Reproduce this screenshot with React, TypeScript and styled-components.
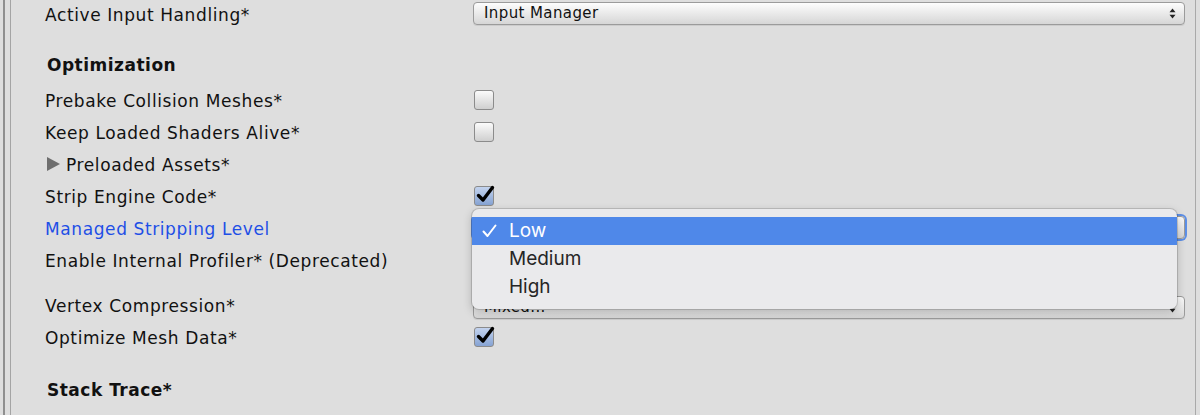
import styled, { createGlobalStyle } from "styled-components";

const GlobalStyle = createGlobalStyle`
  html, body {
    margin: 0;
    padding: 0;
    background: #dedede;
    overflow: hidden;
  }
  body {
    width: 1200px;
    height: 415px;
    font-family: "DejaVu Sans", "Liberation Sans", sans-serif;
  }
`;

const optimizationRows = [
  { id: "prebake", label: "Prebake Collision Meshes*", kind: "check", checked: false },
  { id: "shaders", label: "Keep Loaded Shaders Alive*", kind: "check", checked: false },
  { id: "preloaded", label: "Preloaded Assets*", kind: "foldout" },
  { id: "strip", label: "Strip Engine Code*", kind: "check", checked: true },
  { id: "managed", label: "Managed Stripping Level", kind: "menu" },
  { id: "profiler", label: "Enable Internal Profiler* (Deprecated)", kind: "none" },
];

const menuItems = ["Low", "Medium", "High"];

const UpDownArrows = () => (
  <svg width="7" height="11" viewBox="0 0 7 11">
    <path d="M3.5 0.5 L6.5 4.2 L0.5 4.2 Z" fill="#222" />
    <path d="M3.5 10.5 L6.5 6.8 L0.5 6.8 Z" fill="#222" />
  </svg>
);

const CheckMark = () => (
  <svg width="20" height="20" viewBox="0 0 20 20">
    <path
      d="M3.5 10.5 L8 15 L17.5 2.5"
      fill="none"
      stroke="#000"
      strokeWidth="3.4"
      strokeLinecap="round"
      strokeLinejoin="round"
    />
  </svg>
);

const MenuTick = () => (
  <svg width="15" height="14" viewBox="0 0 15 14">
    <path
      d="M1.5 7.5 L5.5 12 L13.5 1.5"
      fill="none"
      stroke="#fff"
      strokeWidth="2"
      strokeLinecap="round"
      strokeLinejoin="round"
    />
  </svg>
);

const Checkbox = ({ checked }: { checked?: boolean }) => (
  <Box $checked={checked}>{checked && <CheckMark />}</Box>
);

const Popup = ({
  value,
  focused,
  drop,
}: {
  value?: string;
  focused?: boolean;
  drop?: number;
}) => (
  <PopupField $focused={focused} $drop={drop}>
    <PopupText>{value}</PopupText>
    <UpDownArrows />
  </PopupField>
);

const App = () => {
  return (
    <>
      <GlobalStyle />
      <Frame>
        <Inner>
          <Content>
            <Row $height={24}>
              <Label>Active Input Handling*</Label>
              <Popup value="Input Manager" />
            </Row>

            <SectionTitle $top={22} $height={36}>
              Optimization
            </SectionTitle>

            {optimizationRows.map((row) => (
              <Row key={row.id}>
                {row.kind === "foldout" ? (
                  <Foldout>
                    <Triangle />
                    {row.label}
                  </Foldout>
                ) : (
                  <Label $blue={row.kind === "menu"}>{row.label}</Label>
                )}
                {row.kind === "check" && <Checkbox checked={row.checked} />}
                {row.kind === "menu" && (
                  <MenuAnchor>
                    {/* field stays under the open menu, only its focus ring shows */}
                    <Popup focused />
                    <Menu>
                      {menuItems.map((item, i) => (
                        <MenuItem key={item} $active={i === 0}>
                          <Tick>{i === 0 && <MenuTick />}</Tick>
                          <span>{item}</span>
                        </MenuItem>
                      ))}
                    </Menu>
                  </MenuAnchor>
                )}
              </Row>
            ))}

            <Row $top={13}>
              <Label>Vertex Compression*</Label>
              <Popup value="Mixed..." drop={6} />
            </Row>
            <Row>
              <Label>Optimize Mesh Data*</Label>
              <Checkbox checked />
            </Row>

            <SectionTitle $top={20}>Stack Trace*</SectionTitle>
          </Content>
        </Inner>
      </Frame>
    </>
  );
};

export default App;

const Frame = styled.div`
  margin-left: 3px;
  margin-right: 4px;
  height: 415px;
  border-left: 2px solid #8f8f8f;
  border-right: 1px solid #a9a9a9;
  box-sizing: border-box;
`;

const Inner = styled.div`
  margin-left: 5px;
  height: 100%;
  border-left: 1px solid #a4a4a4;
`;

const Content = styled.div`
  display: flex;
  flex-direction: column;
  padding: 1px 10px 0 34px;
`;

const Row = styled.div<{ $height?: number; $top?: number }>`
  display: grid;
  grid-template-columns: 428px 712px;
  align-items: center;
  height: ${(p) => p.$height ?? 32}px;
  margin-top: ${(p) => p.$top ?? 0}px;
`;

const Label = styled.div<{ $blue?: boolean }>`
  font-size: 17px;
  letter-spacing: 0.6px;
  padding-top: 3px;
  color: ${(p) => (p.$blue ? "#1e4fe6" : "#111")};
  white-space: nowrap;
`;

const Foldout = styled.div`
  display: flex;
  align-items: center;
  gap: 6px;
  font-size: 17px;
  letter-spacing: 0.6px;
  padding-top: 3px;
  color: #111;
  white-space: nowrap;
`;

const Triangle = styled.span`
  width: 0;
  height: 0;
  margin-left: 2px;
  margin-top: -2px;
  border-top: 7px solid transparent;
  border-bottom: 7px solid transparent;
  border-left: 13px solid #6e6e6e;
`;

const SectionTitle = styled.div<{ $top: number; $height?: number }>`
  margin-top: ${(p) => p.$top}px;
  height: ${(p) => p.$height ?? 34}px;
  display: flex;
  align-items: flex-start;
  padding: 8px 0 0 2px;
  box-sizing: border-box;
  font-size: 17px;
  letter-spacing: 0.5px;
  font-weight: bold;
  color: #111;
`;

const Box = styled.div<{ $checked?: boolean }>`
  width: 20px;
  height: 20px;
  margin-left: 1px;
  margin-top: 2px;
  box-sizing: border-box;
  border: 1px solid #8b8b8b;
  border-radius: 3px;
  display: flex;
  align-items: center;
  justify-content: center;
  background: ${(p) =>
    p.$checked
      ? "linear-gradient(#c3d3ee, #86a3d3)"
      : "linear-gradient(#fbfbfb, #cfcfcf)"};
  svg {
    margin-top: -3px;
    margin-left: 2px;
    flex-shrink: 0;
  }
`;

const PopupField = styled.div<{ $focused?: boolean; $drop?: number }>`
  height: 23px;
  margin-top: ${(p) => p.$drop ?? 0}px;
  box-sizing: border-box;
  display: flex;
  align-items: center;
  justify-content: space-between;
  padding: 0 8px 0 10px;
  border: 1px solid #9b9b9b;
  border-radius: 4px;
  background: linear-gradient(#fdfdfd, #d6d6d6);
  box-shadow: ${(p) =>
    p.$focused ? "0 0 0 2px #5d8fe6" : "0 1px 0 rgba(0,0,0,0.08)"};
`;

const PopupText = styled.span`
  font-size: 15px;
  letter-spacing: 0.4px;
  color: #111;
`;

const MenuAnchor = styled.div`
  position: relative;
`;

const Menu = styled.div`
  position: absolute;
  top: -7px;
  left: -1px;
  width: 705px;
  height: 100px;
  box-sizing: border-box;
  padding-top: 8px;
  background: #eaeaec;
  border-radius: 7px;
  box-shadow: 0 0 0 1px rgba(0, 0, 0, 0.14), 0 3px 10px rgba(0, 0, 0, 0.22);
  z-index: 10;
`;

const MenuItem = styled.div<{ $active?: boolean }>`
  height: 28px;
  display: flex;
  align-items: center;
  font-family: "Inter", "DejaVu Sans", sans-serif;
  font-size: 19px;
  color: ${(p) => (p.$active ? "#fff" : "#262626")};
  background: ${(p) => (p.$active ? "#4f88e9" : "transparent")};
`;

const Tick = styled.span`
  display: flex;
  align-items: center;
  width: 27px;
  margin-left: 10px;
`;
